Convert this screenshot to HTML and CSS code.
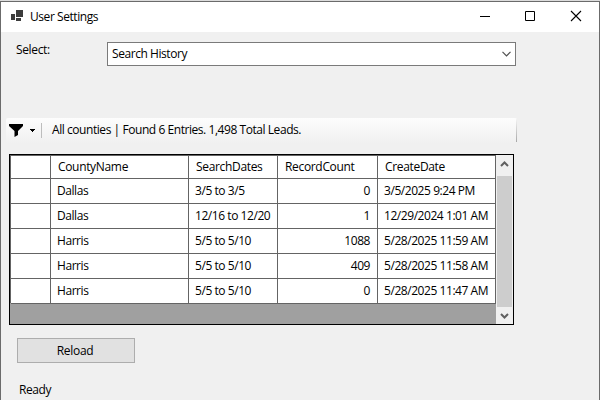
FILE: index.html
```
<!DOCTYPE html>
<html lang="en">
<head>
<meta charset="utf-8">
<title>User Settings</title>
<link rel="stylesheet" href="styles.css">
</head>
<body>
<div class="window">
  <header class="titlebar">
    <svg class="app-icon" width="12" height="11" viewBox="0 0 12 11" shape-rendering="crispEdges"><path fill="#3c3c3c" d="M5 0h7v7H5zM0 4h4v6H0zM5 8h5v3H5z"/></svg>
    <span class="title">User Settings</span>
    <div class="controls">
      <svg width="45" height="30" viewBox="0 0 45 30"><path stroke="#000" d="M17 14.5h10"/></svg>
      <svg width="45" height="30" viewBox="0 0 45 30"><path fill="none" stroke="#000" d="M17.5 9.5h9v9h-9z"/></svg>
      <svg width="45" height="30" viewBox="0 0 45 30"><path fill="none" stroke="#000" stroke-width="1.1" d="M18 9l10 10M28 9l-10 10"/></svg>
    </div>
  </header>
  <div class="select-row">
    <label class="select-label">Select:</label>
    <div class="combo">
      <span class="combo-text">Search History</span>
      <svg width="9" height="6" viewBox="0 0 9 6"><path fill="none" stroke="#505050" stroke-width="1.2" d="M.5 .8l4 4 4-4"/></svg>
    </div>
  </div>
  <div class="toolbar">
    <svg class="filter" width="14" height="13" viewBox="0 0 14 13"><path d="M0 0h14v2L9 7v4l-3.500 2V7L0 2z"/></svg>
    <svg class="drop" width="5" height="3" viewBox="0 0 5 3" shape-rendering="crispEdges"><path d="M0 0h5v1H4v1H3v1H2V2H1V1H0z"/></svg>
    <span class="sep"></span>
    <span class="summary">All counties | Found 6 Entries. 1,498 Total Leads.</span>
  </div>
  <div class="grid">
    <div class="cells">
      <div class="row head"><span></span><span>CountyName</span><span>SearchDates</span><span>RecordCount</span><span>CreateDate</span></div>
      <div class="row"><span></span><span>Dallas</span><span>3/5 to 3/5</span><span class="num">0</span><span>3/5/2025 9:24 PM</span></div>
      <div class="row"><span></span><span>Dallas</span><span>12/16 to 12/20</span><span class="num">1</span><span>12/29/2024 1:01 AM</span></div>
      <div class="row"><span></span><span>Harris</span><span>5/5 to 5/10</span><span class="num">1088</span><span>5/28/2025 11:59 AM</span></div>
      <div class="row"><span></span><span>Harris</span><span>5/5 to 5/10</span><span class="num">409</span><span>5/28/2025 11:58 AM</span></div>
      <div class="row"><span></span><span>Harris</span><span>5/5 to 5/10</span><span class="num">0</span><span>5/28/2025 11:47 AM</span></div>
    </div>
    <div class="scrollbar">
      <svg width="17" height="21" viewBox="0 0 17 21"><path fill="none" stroke="#606060" stroke-width="2" d="M5 11l3.500-3.500 3.500 3.500"/></svg>
      <div class="thumb"></div>
      <svg width="17" height="17" viewBox="0 0 17 17"><path fill="none" stroke="#606060" stroke-width="2" d="M5 7l3.500 3.500 3.500-3.500"/></svg>
    </div>
  </div>
  <button class="reload">Reload</button>
  <footer class="status">Ready</footer>
</div>
</body>
</html>
```
FILE: styles.css
```
* { box-sizing: border-box; }
body {
  margin: 0;
  height: 400px;
  overflow: hidden;
  background: #dcdcdc;
  padding-top: 1px;
  font: 12px/16px "Open Sans", "Noto Sans", sans-serif;
  letter-spacing: -0.44px;
  color: #000;
}
.window {
  height: 399px;
  border: 1px solid #6b6b6b;
  border-bottom: 0;
  background: #f0f0f0;
  white-space: nowrap;
}
.titlebar {
  display: flex;
  height: 30px;
  background: #fff;
  padding-left: 10px;
}
.app-icon { margin-top: 8px; }
.title { margin: 7px auto 0 7px; }
.controls { display: flex; margin-right: 1px; }
.select-row { display: flex; padding: 10px 0 0 15px; }
.select-label { width: 91px; letter-spacing: -0.35px; }
.combo {
  display: flex;
  align-items: center;
  justify-content: space-between;
  width: 409px;
  height: 24px;
  padding: 0 4px;
  background: #fff;
  border: 1px solid #7a7a7a;
}
.toolbar {
  display: flex;
  width: 511px;
  height: 25px;
  margin: 52px 0 0 5px;
  padding-left: 3px;
  border-radius: 2px;
  background: linear-gradient(#fdfdfd, #f0f0f0);
  border-right: 1px solid;
  border-image: linear-gradient(#fafafa, #a8a8a8 92%, #f0f0f0 92%) 1;
}
.filter { margin-top: 6px; }
.drop { margin: 11px 0 0 7px; }
.sep { width: 1px; height: 15px; margin: 5px 10px 0 6px; background: #bdbdbd; }
.summary { margin-top: 4px; }
.grid {
  display: flex;
  width: 505px;
  height: 171px;
  margin: 11px 0 0 8px;
  border: 1px solid #000;
  background: #a0a0a0;
}
.cells { width: 486px; height: 148px; border: solid #646464; border-width: 1px 0 0 1px; }
.row {
  display: grid;
  grid-template-columns: 40px 138px 89px 100px 118px;
  height: 25px;
  line-height: 25px;
  background: #fff;
}
.row.head { height: 22px; line-height: 22px; letter-spacing: -0.33px; }
.row span { border: solid #646464; border-width: 0 1px 1px 0; padding-left: 6px; }
.row.head span { padding-left: 7px; }
.row .num { text-align: right; padding: 0 7px 0 0; }
.scrollbar { display: flex; flex-direction: column; width: 17px; background: #f0f0f0; }
.thumb { height: 131px; margin: 0 1px; background: #cdcdcd; }
.reload {
  display: block;
  width: 118px;
  height: 25px;
  margin: 13px 0 0 16px;
  padding: 1px 2px 0 0;
  border: 1px solid #adadad;
  background: #e1e1e1;
  color: #000;
  font: inherit;
  letter-spacing: -0.3px;
}
.status { margin: 19px 0 0 18px; letter-spacing: -0.4px; }
```
